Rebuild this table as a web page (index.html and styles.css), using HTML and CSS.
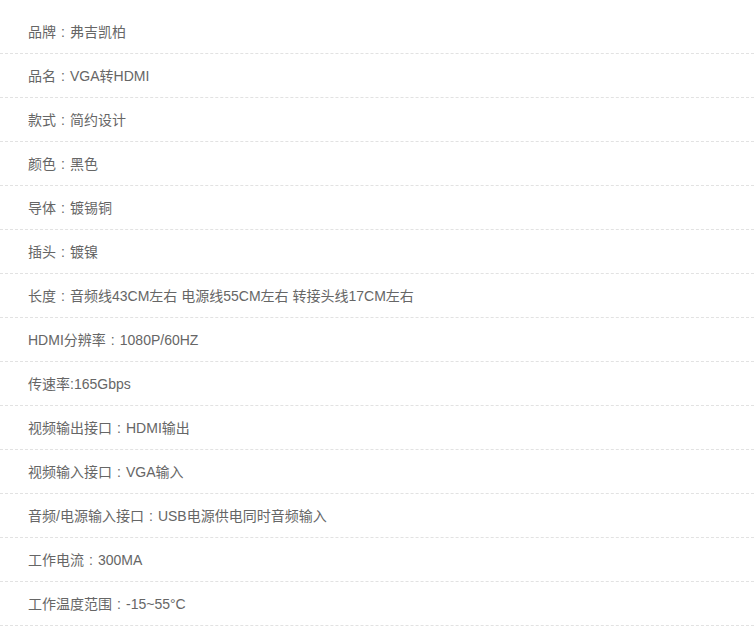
FILE: index.html
```html
<!DOCTYPE html>
<html lang="zh">
<head>
<meta charset="utf-8">
<link rel="stylesheet" href="styles.css">
</head>
<body>
<ul class="params">
  <li class="param">品牌<span class="sep">:</span>弗吉凯柏</li>
  <li class="param">品名<span class="sep">:</span>VGA转HDMI</li>
  <li class="param">款式<span class="sep">:</span>简约设计</li>
  <li class="param">颜色<span class="sep">:</span>黑色</li>
  <li class="param">导体<span class="sep">:</span>镀锡铜</li>
  <li class="param">插头<span class="sep">:</span>镀镍</li>
  <li class="param">长度<span class="sep">:</span>音频线43CM左右 电源线55CM左右 转接头线17CM左右</li>
  <li class="param">HDMI分辨率<span class="sep">:</span>1080P/60HZ</li>
  <li class="param">传速率:165Gbps</li>
  <li class="param">视频输出接口<span class="sep">:</span>HDMI输出</li>
  <li class="param">视频输入接口<span class="sep">:</span>VGA输入</li>
  <li class="param">音频/电源输入接口<span class="sep">:</span>USB电源供电同时音频输入</li>
  <li class="param">工作电流<span class="sep">:</span>300MA</li>
  <li class="param">工作温度范围<span class="sep">:</span>-15~55°C</li>
</ul>
</body>
</html>
```
FILE: styles.css
```css
html, body {
  margin: 0;
  padding: 0;
  background: #fff;
}
.params {
  list-style: none;
  margin: 0;
  padding: 10px 0 0;
}
.param {
  height: 43px;
  line-height: 44px;
  padding-left: 28px;
  border-bottom: 1px dashed #e2e2e2;
  font-family: "Liberation Sans", "Noto Sans CJK SC", sans-serif;
  font-size: 14px;
  color: #666;
  white-space: nowrap;
}
.sep {
  display: inline-block;
  width: 14px;
  text-align: center;
}
```
